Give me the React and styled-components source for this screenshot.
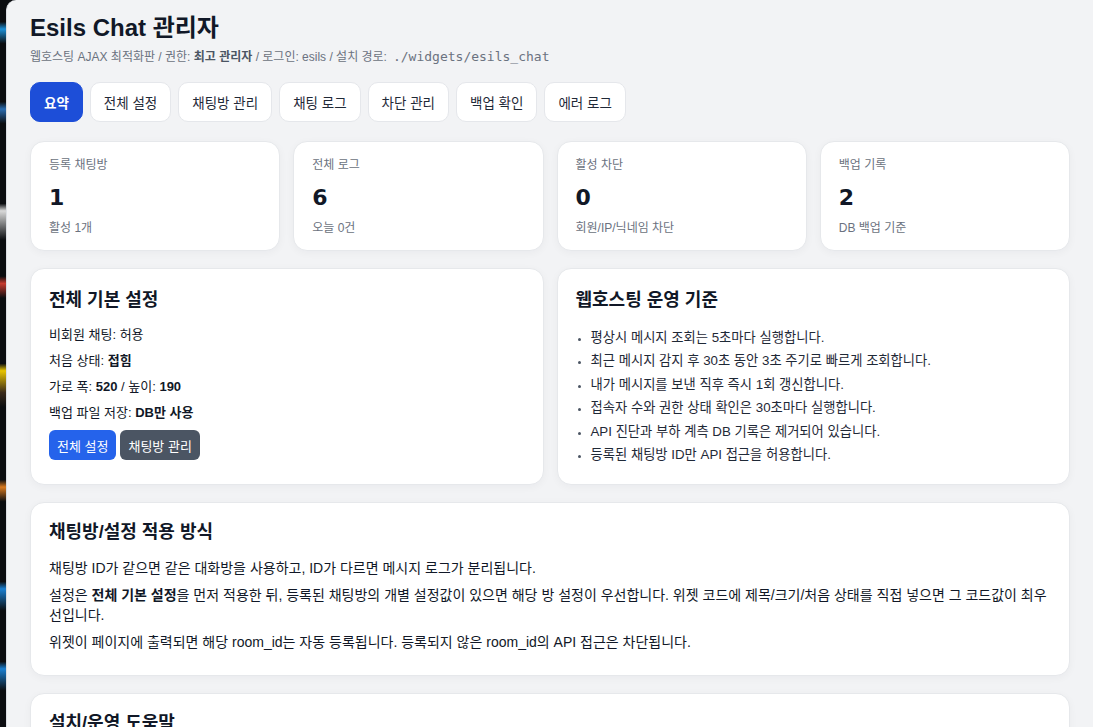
import React from 'react';
import styled, { createGlobalStyle } from 'styled-components';

const GlobalStyle = createGlobalStyle`
  html, body {
    margin: 0;
    padding: 0;
    background: #0b0d10;
  }
  body {
    font-family: "Liberation Sans", "Noto Sans CJK KR", Arial, sans-serif;
    color: #111827;
  }
`;

const Frame = styled.div`
  display: flex;
  min-height: 727px;
  height: 727px;
  overflow: hidden;
`;

const EdgeStrip = styled.div`
  width: 6px;
  flex: 0 0 6px;
  background: linear-gradient(
    180deg,
    #0b0d10 0%, #0b0d10 3%, #1c8fd6 4%, #0b0d10 6%, #0b0d10 14%, #2a6cb0 15%,
    #0b0d10 17%, #0b0d10 28%, #d9d9d9 29%, #0b0d10 33%, #0b0d10 38%, #c63a2e 39%,
    #0b0d10 41%, #0b0d10 50%, #e8c400 51%, #3a2a1a 54%, #0b0d10 56%, #0b0d10 66%,
    #d97a20 67%, #0b0d10 69%, #0b0d10 80%, #1b7fd0 81%, #0b0d10 84%, #0b0d10 91%,
    #1b7fd0 92%, #0b0d10 95%, #0b0d10 100%
  );
`;

const Page = styled.main`
  flex: 1;
  background: #f2f3f5;
  border-top-left-radius: 10px;
  border-left: 1px solid #dcdfe4;
  padding: 12px 23px 0 23px;
  display: flex;
  flex-direction: column;
`;

const Title = styled.h1`
  margin: 0;
  font-size: 24px;
  font-weight: 700;
  line-height: 32px;
  color: #111827;
`;

const Subtitle = styled.p`
  margin: 4px 0 0;
  font-size: 12px;
  line-height: 18px;
  color: #6b7280;

  b {
    color: #4b5563;
  }
  code {
    font-family: "DejaVu Sans Mono", "Liberation Mono", monospace;
    font-size: 13px;
    margin-left: 6px;
  }
`;

const Tabs = styled.nav`
  display: flex;
  gap: 7px;
  margin-top: 16px;
`;

const Tab = styled.button`
  height: 40px;
  padding: 0 13px;
  border-radius: 10px;
  border: 1px solid ${({ active }) => (active ? '#1d4ed8' : '#e5e7eb')};
  background: ${({ active }) => (active ? '#1d4ed8' : '#ffffff')};
  color: ${({ active }) => (active ? '#ffffff' : '#1f2937')};
  font-family: inherit;
  font-size: 13.5px;
  font-weight: ${({ active }) => (active ? 700 : 400)};
  cursor: pointer;
`;

const StatGrid = styled.section`
  display: grid;
  grid-template-columns: repeat(4, 1fr);
  gap: 13px;
  margin-top: 19px;
`;

const Card = styled.div`
  background: #ffffff;
  border: 1px solid #e6e8eb;
  border-radius: 14px;
  box-shadow: 0 2px 8px rgba(15, 23, 42, 0.04);
  padding: ${({ pad }) => pad || '18px'};
`;

const StatLabel = styled.div`
  font-size: 12px;
  line-height: 16px;
  color: #6b7280;
`;

const StatValue = styled.div`
  font-family: "DejaVu Sans", "Liberation Sans", sans-serif;
  font-size: 22px;
  font-weight: 700;
  line-height: 28px;
  margin-top: 11px;
  color: #111827;
`;

const StatSub = styled.div`
  font-size: 12px;
  line-height: 16px;
  color: #6b7280;
  margin-top: 8px;
`;

const PanelRow = styled.section`
  display: grid;
  grid-template-columns: 1fr 1fr;
  gap: 13px;
  margin-top: 17px;
`;

const PanelTitle = styled.h2`
  margin: 0 0 14px;
  font-size: 18px;
  font-weight: 700;
  line-height: 24px;
  color: #111827;
`;

const InfoLine = styled.p`
  margin: 0 0 9px;
  font-size: 13px;
  line-height: 17px;
  color: #111827;
`;

const ButtonRow = styled.div`
  display: flex;
  gap: 4px;
  margin-top: 1px;
`;

const ActionButton = styled.button`
  height: 30px;
  padding: 0 8px;
  border: none;
  border-radius: 6px;
  background: ${({ tone }) => (tone === 'gray' ? '#4b5563' : '#2563eb')};
  color: #ffffff;
  font-family: inherit;
  font-size: 13px;
  cursor: pointer;
`;

const BulletList = styled.ul`
  margin: 0;
  padding-left: 15px;
  font-size: 13.3px;
  line-height: 23.4px;
  color: #1f2937;

  li::marker {
    color: #4b5563;
    font-size: 11px;
  }
`;

const WideCard = styled(Card)`
  margin-top: 17px;
  padding: 17px 18px 16px;
`;

const Para = styled.p`
  margin: 0 0 7px;
  font-size: 14px;
  line-height: 20px;
  color: #111827;
`;

const stats = [
  { label: '등록 채팅방', value: '1', sub: '활성 1개' },
  { label: '전체 로그', value: '6', sub: '오늘 0건' },
  { label: '활성 차단', value: '0', sub: '회원/IP/닉네임 차단' },
  { label: '백업 기록', value: '2', sub: 'DB 백업 기준' },
];

const tabs = ['요약', '전체 설정', '채팅방 관리', '채팅 로그', '차단 관리', '백업 확인', '에러 로그'];

const rules = [
  '평상시 메시지 조회는 5초마다 실행합니다.',
  '최근 메시지 감지 후 30초 동안 3초 주기로 빠르게 조회합니다.',
  '내가 메시지를 보낸 직후 즉시 1회 갱신합니다.',
  '접속자 수와 권한 상태 확인은 30초마다 실행합니다.',
  'API 진단과 부하 계측 DB 기록은 제거되어 있습니다.',
  '등록된 채팅방 ID만 API 접근을 허용합니다.',
];

export default function App() {
  return (
    <>
      <GlobalStyle />
      <Frame>
        <EdgeStrip />
        <Page>
          <Title>Esils Chat 관리자</Title>
          <Subtitle>
            웹호스팅 AJAX 최적화판 / 권한: <b>최고 관리자</b> / 로그인: esils / 설치 경로:
            <code>./widgets/esils_chat</code>
          </Subtitle>

          <Tabs>
            {tabs.map((t, i) => (
              <Tab key={t} active={i === 0}>{t}</Tab>
            ))}
          </Tabs>

          <StatGrid>
            {stats.map((s) => (
              <Card key={s.label} pad="15px 18px 14px">
                <StatLabel>{s.label}</StatLabel>
                <StatValue>{s.value}</StatValue>
                <StatSub>{s.sub}</StatSub>
              </Card>
            ))}
          </StatGrid>

          <PanelRow>
            <Card pad="19px 18px 24px">
              <PanelTitle>전체 기본 설정</PanelTitle>
              <InfoLine>비회원 채팅: 허용</InfoLine>
              <InfoLine>처음 상태: <b>접힘</b></InfoLine>
              <InfoLine>가로 폭: <b>520</b> / 높이: <b>190</b></InfoLine>
              <InfoLine>백업 파일 저장: <b>DB만 사용</b></InfoLine>
              <ButtonRow>
                <ActionButton>전체 설정</ActionButton>
                <ActionButton tone="gray">채팅방 관리</ActionButton>
              </ButtonRow>
            </Card>
            <Card pad="19px 18px 18px">
              <PanelTitle>웹호스팅 운영 기준</PanelTitle>
              <BulletList>
                {rules.map((r) => (
                  <li key={r}>{r}</li>
                ))}
              </BulletList>
            </Card>
          </PanelRow>

          <WideCard>
            <PanelTitle>채팅방/설정 적용 방식</PanelTitle>
            <Para>채팅방 ID가 같으면 같은 대화방을 사용하고, ID가 다르면 메시지 로그가 분리됩니다.</Para>
            <Para>
              설정은 <b>전체 기본 설정</b>을 먼저 적용한 뒤, 등록된 채팅방의 개별 설정값이 있으면 해당 방 설정이 우선합니다. 위젯 코드에 제목/크기/처음 상태를 직접 넣으면 그 코드값이 최우선입니다.
            </Para>
            <Para>위젯이 페이지에 출력되면 해당 room_id는 자동 등록됩니다. 등록되지 않은 room_id의 API 접근은 차단됩니다.</Para>
          </WideCard>

          <WideCard>
            <PanelTitle>설치/운영 도움말</PanelTitle>
          </WideCard>
        </Page>
      </Frame>
    </>
  );
}
